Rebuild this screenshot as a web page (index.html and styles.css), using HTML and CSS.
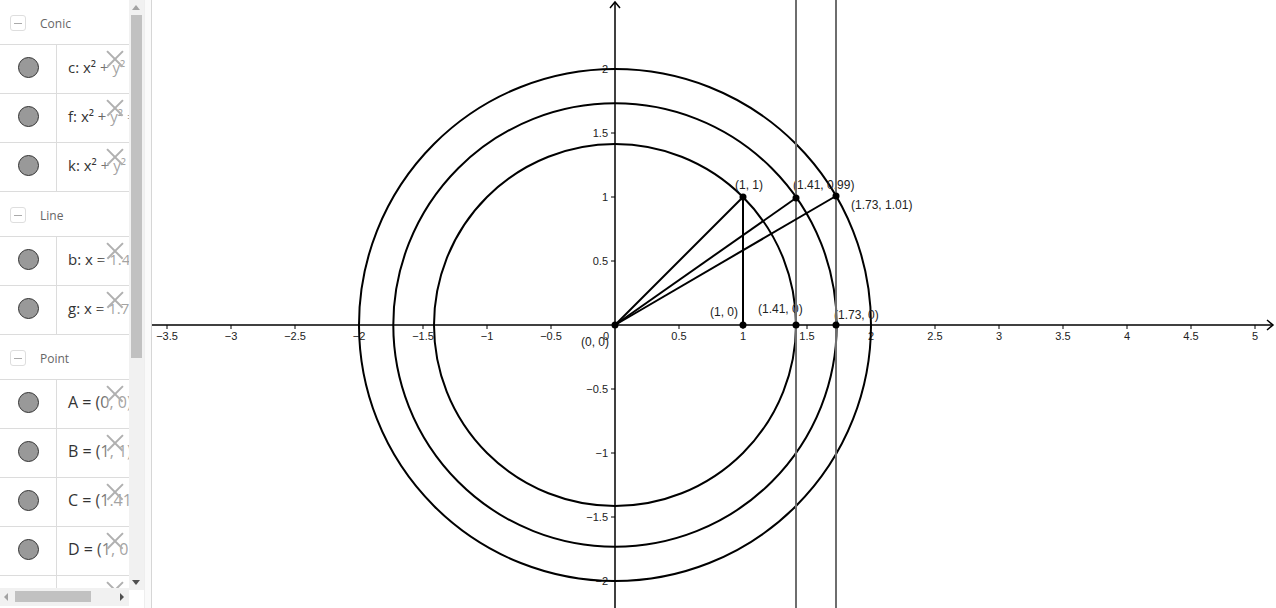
FILE: index.html
```html
<!DOCTYPE html>
<html>
<head>
<meta charset="utf-8">
<link rel="stylesheet" href="styles.css">
</head>
<body>
<div class="app">
  <div class="sidebar">
    <div class="listcol">
      <div class="items">
        <div class="header"><span class="minus"></span><span class="htitle">Conic</span></div>
        <div class="row"><div class="mark"><span class="dot"></span></div><div class="expr">c: x² + y² = 2</div><span class="fade"></span><span class="close"></span></div>
        <div class="row"><div class="mark"><span class="dot"></span></div><div class="expr">f: x² + y² = 3</div><span class="fade"></span><span class="close"></span></div>
        <div class="row"><div class="mark"><span class="dot"></span></div><div class="expr">k: x² + y² = 4</div><span class="fade"></span><span class="close"></span></div>
        <div class="header"><span class="minus"></span><span class="htitle">Line</span></div>
        <div class="row"><div class="mark"><span class="dot"></span></div><div class="expr">b: x = 1.41</div><span class="fade"></span><span class="close"></span></div>
        <div class="row"><div class="mark"><span class="dot"></span></div><div class="expr">g: x = 1.73</div><span class="fade"></span><span class="close"></span></div>
        <div class="header"><span class="minus"></span><span class="htitle">Point</span></div>
        <div class="row"><div class="mark"><span class="dot"></span></div><div class="expr big">A = (0, 0)</div><span class="fade"></span><span class="close"></span></div>
        <div class="row"><div class="mark"><span class="dot"></span></div><div class="expr big">B = (1, 1)</div><span class="fade"></span><span class="close"></span></div>
        <div class="row"><div class="mark"><span class="dot"></span></div><div class="expr big">C = (1.41, 0.99)</div><span class="fade"></span><span class="close"></span></div>
        <div class="row"><div class="mark"><span class="dot"></span></div><div class="expr big">D = (1, 0)</div><span class="fade"></span><span class="close"></span></div>
        <div class="row"><div class="mark"><span class="dot"></span></div><div class="expr big">E = (1.41, 0)</div><span class="fade"></span><span class="close"></span></div>
      </div>
      <div class="hscroll">
        <span class="arr-left"></span>
        <span class="hthumb"></span>
        <span class="arr-right"></span>
      </div>
    </div>
    <div class="vscroll">
      <span class="arr-up"></span>
      <span class="vthumb"></span>
      <span class="arr-down"></span>
    </div>
    <div class="splitter"></div>
  </div>
  <div class="graphics">
    <svg class="plot" width="1124" height="608" viewBox="152 0 1124 608" xmlns="http://www.w3.org/2000/svg">
      <g stroke="#000" stroke-width="1.5" fill="none">
        <line x1="152" y1="325" x2="1273" y2="325"/>
        <polyline points="1267,320 1273,325 1267,330"/>
        <line x1="615" y1="608" x2="615" y2="2"/>
        <polyline points="610,8 615,2 620,8"/>
      </g>
      <g stroke="#000" stroke-width="1">
        <line x1="167" y1="325" x2="167" y2="329"/>
        <line x1="231" y1="325" x2="231" y2="329"/>
        <line x1="295" y1="325" x2="295" y2="329"/>
        <line x1="359" y1="325" x2="359" y2="329"/>
        <line x1="423" y1="325" x2="423" y2="329"/>
        <line x1="487" y1="325" x2="487" y2="329"/>
        <line x1="551" y1="325" x2="551" y2="329"/>
        <line x1="679" y1="325" x2="679" y2="329"/>
        <line x1="743" y1="325" x2="743" y2="329"/>
        <line x1="807" y1="325" x2="807" y2="329"/>
        <line x1="871" y1="325" x2="871" y2="329"/>
        <line x1="935" y1="325" x2="935" y2="329"/>
        <line x1="999" y1="325" x2="999" y2="329"/>
        <line x1="1063" y1="325" x2="1063" y2="329"/>
        <line x1="1127" y1="325" x2="1127" y2="329"/>
        <line x1="1191" y1="325" x2="1191" y2="329"/>
        <line x1="1255" y1="325" x2="1255" y2="329"/>
        <line x1="611" y1="69" x2="615" y2="69"/>
        <line x1="611" y1="133" x2="615" y2="133"/>
        <line x1="611" y1="197" x2="615" y2="197"/>
        <line x1="611" y1="261" x2="615" y2="261"/>
        <line x1="611" y1="389" x2="615" y2="389"/>
        <line x1="611" y1="453" x2="615" y2="453"/>
        <line x1="611" y1="517" x2="615" y2="517"/>
        <line x1="611" y1="581" x2="615" y2="581"/>
      </g>
      <g class="axlab" text-anchor="middle">
        <text x="167" y="340">−3.5</text>
        <text x="231" y="340">−3</text>
        <text x="295" y="340">−2.5</text>
        <text x="359" y="340">−2</text>
        <text x="423" y="340">−1.5</text>
        <text x="487" y="340">−1</text>
        <text x="551" y="340">−0.5</text>
        <text x="679" y="340">0.5</text>
        <text x="743" y="340">1</text>
        <text x="807" y="340">1.5</text>
        <text x="871" y="340">2</text>
        <text x="935" y="340">2.5</text>
        <text x="999" y="340">3</text>
        <text x="1063" y="340">3.5</text>
        <text x="1127" y="340">4</text>
        <text x="1191" y="340">4.5</text>
        <text x="1255" y="340">5</text>
      </g>
      <g class="axlab" text-anchor="end">
        <text x="608" y="73">2</text>
        <text x="608" y="137">1.5</text>
        <text x="608" y="201">1</text>
        <text x="608" y="265">0.5</text>
        <text x="608" y="393">−0.5</text>
        <text x="608" y="457">−1</text>
        <text x="608" y="521">−1.5</text>
        <text x="608" y="585">−2</text>
        <text x="609" y="340">0</text>
      </g>
      <g stroke="#000" stroke-width="2" fill="none">
        <circle cx="615" cy="325" r="181"/>
        <circle cx="615" cy="325" r="221.7"/>
        <circle cx="615" cy="325" r="256"/>
      </g>
      <g class="ptlab">
        <text x="735" y="189">(1, 1)</text>
        <text x="793" y="189">(1.41, 0.99)</text>
        <text x="851" y="209">(1.73, 1.01)</text>
        <text x="710" y="316">(1, 0)</text>
        <text x="758" y="313">(1.41, 0)</text>
        <text x="834" y="319">(1.73, 0)</text>
        <text x="581" y="346">(0, 0)</text>
      </g>
      <g stroke="#6e6e6e" stroke-width="2">
        <line x1="796" y1="0" x2="796" y2="608"/>
        <line x1="836" y1="0" x2="836" y2="608"/>
      </g>
      <g stroke="#000" stroke-width="2">
        <line x1="615" y1="325" x2="743" y2="197"/>
        <line x1="615" y1="325" x2="796" y2="198"/>
        <line x1="615" y1="325" x2="836" y2="196"/>
        <line x1="743" y1="197" x2="743" y2="325"/>
      </g>
      <g fill="#000">
        <circle cx="615" cy="325" r="3.5"/>
        <circle cx="743" cy="197" r="3.5"/>
        <circle cx="796" cy="198" r="3.5"/>
        <circle cx="836" cy="196" r="3.5"/>
        <circle cx="743" cy="325" r="3.5"/>
        <circle cx="796" cy="325" r="3.5"/>
        <circle cx="836" cy="325" r="3.5"/>
      </g>
    </svg>
  </div>
</div>
</body>
</html>
```
FILE: styles.css
```css
* { box-sizing: border-box; }
html, body { margin: 0; padding: 0; background: #fff; }
body { width: 1276px; height: 608px; overflow: hidden; font-family: "Open Sans", "Noto Sans", sans-serif; }
.app { display: flex; width: 1276px; height: 608px; }
.sidebar { display: flex; width: 152px; height: 608px; flex: none; }
.listcol { width: 129px; display: flex; flex-direction: column; }
.items { flex: 1; overflow: hidden; }
.header {
  height: 45px; border-bottom: 1px solid #dcdcdc;
  display: flex; align-items: center; padding-left: 10px; padding-top: 2px;
}
.minus {
  width: 16px; height: 16px; border: 1px solid #dedede; border-radius: 3px;
  display: flex; align-items: center; justify-content: center; margin-right: 14px;
}
.minus::before { content: ""; width: 8px; height: 1px; background: #aaa; }
.htitle { font-size: 12px; color: #666; }
.row {
  position: relative; height: 49px; border-bottom: 1px solid #dcdcdc;
  display: flex; align-items: stretch; overflow: hidden;
}
.mark {
  width: 57px; flex: none; border-right: 1px solid #dcdcdc;
  display: flex; align-items: center; justify-content: center; padding-bottom: 4px;
}
.dot { width: 21px; height: 21px; border-radius: 50%; background: #999; border: 1.2px solid #333; }
.expr {
  padding-left: 11px; display: flex; align-items: center; padding-bottom: 4px;
  font-size: 15px; color: #333; white-space: nowrap;
}
.expr.big { font-size: 16px; }
.fade {
  position: absolute; top: 0; bottom: 0; right: 0; width: 34px;
  background: linear-gradient(90deg, rgba(255,255,255,0), rgba(255,255,255,0.55) 45%);
}
.close { position: absolute; left: 106px; top: 5px; width: 18px; height: 18px; }
.close::before, .close::after {
  content: ""; position: absolute; left: -2px; top: 8px; width: 22px; height: 1.5px; background: #b0b0b0;
}
.close::before { transform: rotate(45deg); }
.close::after { transform: rotate(-45deg); }
.hscroll {
  height: 18px; flex: none; position: relative; background: #f1f1f1; margin-bottom: 2px;
}
.hthumb { position: absolute; left: 15px; top: 3px; width: 76px; height: 11px; background: #c1c1c1; }
.arr-left { position: absolute; left: 4px; top: 5px; border-right: 4px solid #a3a3a3; border-top: 4px solid transparent; border-bottom: 4px solid transparent; }
.arr-right { position: absolute; left: 120px; top: 5px; border-left: 4px solid #505050; border-top: 4px solid transparent; border-bottom: 4px solid transparent; }
.vscroll { width: 15px; height: 590px; position: relative; background: #f1f1f1; flex: none; }
.arr-up { position: absolute; left: 3px; top: 5px; border-bottom: 5px solid #a3a3a3; border-left: 4px solid transparent; border-right: 4px solid transparent; }
.vthumb { position: absolute; left: 2px; top: 15px; width: 11px; height: 343px; background: #c1c1c1; }
.arr-down { position: absolute; left: 3px; top: 580px; border-top: 5px solid #505050; border-left: 4px solid transparent; border-right: 4px solid transparent; }
.splitter { width: 8px; flex: none; background: #fafafa; border-left: 1px solid #eee; border-right: 1px solid #d6d6d6; }
.graphics { flex: 1; height: 608px; overflow: hidden; }
.plot { display: block; }
.axlab { font-family: "Liberation Sans", Arial, sans-serif; font-size: 11px; fill: #222; }
.ptlab { font-family: "Liberation Sans", Arial, sans-serif; font-size: 12px; fill: #222; }
```
